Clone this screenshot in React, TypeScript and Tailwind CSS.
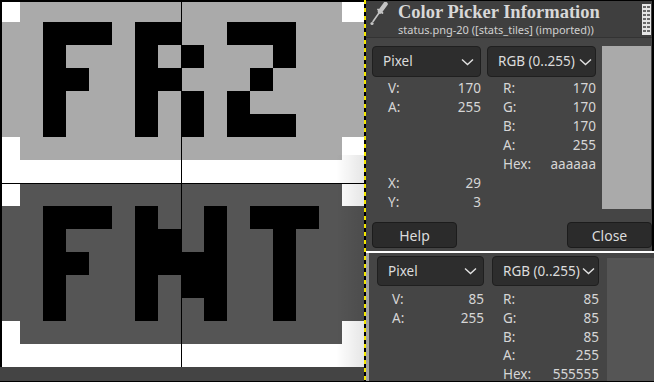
import React from "react";

// 16x16 cells: "." = tile gray, X = black, W = white
const frz = [
  "W..............W",
  "..XXX.XX..XXX...",
  "..X...X.X...X...",
  "..XX..XX...X....",
  "..X...X.X.X.....",
  "..X...X.X.XXX...",
  "W..............W",
  "WWWWWWWWWWWWWWWW",
];

const fnt = [
  "W..............W",
  "..XXX.X..X.XXX..",
  "..X...XX.X..X...",
  "..XX..XXXX..X...",
  "..X...X.XX..X...",
  "..X...X..X..X...",
  "W..............W",
  "WWWWWWWWWWWWWWWW",
];

const CELL = 23;

function PixelCanvas() {
  const rows = [
    ...frz.map((r) => ({ r, gray: "#aaaaaa" })),
    ...fnt.map((r) => ({ r, gray: "#555555" })),
  ];
  return (
    <svg width={364} height={381} className="block shrink-0" shapeRendering="crispEdges">
      <defs>
        <linearGradient id="shade" x1="0" x2="1" y1="0" y2="0">
          <stop offset="0" stopColor="#000" stopOpacity="0" />
          <stop offset="1" stopColor="#000" stopOpacity="0.1" />
        </linearGradient>
      </defs>
      <rect width={364} height={381} fill="#444444" />
      {rows.map(({ r, gray }, y) =>
        r.split("").map((ch, x) => (
          <rect
            key={`${x}-${y}`}
            x={-3 + x * CELL}
            y={-1 + y * CELL}
            width={CELL}
            height={CELL}
            fill={ch === "X" ? "#000000" : ch === "W" ? "#ffffff" : gray}
          />
        ))
      )}
      {/* drop shadow of the dialog */}
      <rect x={336} y={155} width={28} height={212} fill="url(#shade)" />
      {/* grid lines */}
      <rect x={181} y={0} width={1} height={367} fill="#000" />
      <rect x={0} y={183} width={364} height={1} fill="#000" />
      {/* frame */}
      <rect x={0} y={0} width={364} height={2} fill="#000" />
      <rect x={0} y={0} width={2} height={367} fill="#000" />
    </svg>
  );
}

function Chevron() {
  return (
    <svg width="13" height="8" viewBox="0 0 13 8" className="shrink-0">
      <path d="M1 1.5 L6.5 6.5 L12 1.5" fill="none" stroke="#e2e2e2" strokeWidth="1.4" />
    </svg>
  );
}

function Dropdown({ label, className }: { label: string; className: string }) {
  return (
    <div
      className={`flex items-center rounded-[4px] border border-[#1f1f1f] bg-[#2d2d2d] pl-[10px] text-[13.5px] text-[#dcdcdc] ${className}`}
    >
      <span className="flex-1 whitespace-nowrap">{label}</span>
      <Chevron />
    </div>
  );
}

function Row({
  label,
  value,
  pad,
  h,
}: {
  label?: string;
  value?: string;
  pad: string;
  h: string;
}) {
  return (
    <div className={`flex items-center justify-between ${pad} ${h} text-[13.5px] text-[#d6d6d6]`}>
      <span>{label}</span>
      <span>{value}</span>
    </div>
  );
}

function Eyedropper() {
  return (
    <svg width="20" height="25" viewBox="0 0 20 25" className="shrink-0">
      <path d="M16.5 2 L11 9.5" stroke="#c4c4c4" strokeWidth="4.5" strokeLinecap="round" />
      <path d="M9 7.5 L13.5 11" stroke="#c4c4c4" strokeWidth="1.8" strokeLinecap="round" />
      <path d="M11 9.5 L4 19.5" stroke="#c4c4c4" strokeWidth="1.6" strokeLinecap="round" />
      <circle cx="3" cy="21.5" r="1.6" fill="#c4c4c4" />
    </svg>
  );
}

function Grip() {
  return (
    <svg width="9" height="31" viewBox="0 0 9 31" className="absolute right-[1px] top-[3px]">
      <rect width="9" height="31" fill="#e6e6e6" />
      {[2, 6, 10, 14, 18, 22, 26].map((y) => (
        <g key={y} fill="#6a6a6a">
          <rect x="1" y={y} width="3" height="2" />
          <rect x="5" y={y} width="3" height="2" />
        </g>
      ))}
    </svg>
  );
}

export default function App() {
  return (
    <div className="flex h-[382px] w-[654px] overflow-hidden border-b border-black bg-black font-['Noto_Sans',sans-serif]">
      <PixelCanvas />
      <div className="h-full w-[2px] shrink-0 bg-[repeating-linear-gradient(to_bottom,#f2e600_0px,#f2e600_4px,#000_4px,#000_8px)]" />

      <div className="flex w-[288px] shrink-0 flex-col">
        {/* first picker dialog */}
        <div className="flex h-[251px] flex-col border-t border-r-2 border-black bg-[#454545]">
          <div className="relative flex h-[37px] items-start border-b border-[#333333] bg-[#3f3f3f]">
            <div className="ml-[3px] mt-[1px]">
              <Eyedropper />
            </div>
            <div className="ml-[9px] flex flex-col">
              <span className="font-['Liberation_Serif',serif] text-[18.5px] font-bold leading-[22px] text-[#d8d8d8]">
                Color Picker Information
              </span>
              <span className="text-[11px] leading-[14px] text-[#d0d0d0]">
                status.png-20 ([stats_tiles] (imported))
              </span>
            </div>
            <Grip />
          </div>

          <div className="flex flex-col pl-[6px] pt-[8px]">
            <div className="flex gap-[6px]">
              <div className="grid w-[224px] grid-cols-2 gap-x-[6px]">
                <Dropdown label="Pixel" className="h-[31px] pr-[6px]" />
                <Dropdown label="RGB (0..255)" className="h-[31px] pr-[3px]" />
                <div className="mt-[2px] flex flex-col">
                  <Row label="V:" value="170" pad="pl-[16px]" h="h-[19px]" />
                  <Row label="A:" value="255" pad="pl-[16px]" h="h-[19px]" />
                  <Row pad="pl-[16px]" h="h-[19px]" />
                  <Row pad="pl-[16px]" h="h-[19px]" />
                  <Row pad="pl-[16px]" h="h-[19px]" />
                  <Row label="X:" value="29" pad="pl-[16px]" h="h-[19px]" />
                  <Row label="Y:" value="3" pad="pl-[16px]" h="h-[19px]" />
                </div>
                <div className="mt-[2px] flex flex-col">
                  <Row label="R:" value="170" pad="pl-[16px]" h="h-[19px]" />
                  <Row label="G:" value="170" pad="pl-[16px]" h="h-[19px]" />
                  <Row label="B:" value="170" pad="pl-[16px]" h="h-[19px]" />
                  <Row label="A:" value="255" pad="pl-[16px]" h="h-[19px]" />
                  <Row label="Hex:" value="aaaaaa" pad="pl-[16px]" h="h-[19px]" />
                </div>
              </div>
              <div className="h-[163px] w-[49px] bg-[#aaaaaa]" />
            </div>

            <div className="mt-[10px] flex justify-between">
              <button className="h-[26px] w-[85px] rounded-[4px] border border-[#1c1c1c] bg-[#2b2b2b] text-[14px] text-[#dcdcdc]">
                Help
              </button>
              <button className="h-[26px] w-[85px] rounded-[4px] border border-[#1c1c1c] bg-[#2b2b2b] text-[14px] text-[#dcdcdc]">
                Close
              </button>
            </div>
          </div>
        </div>

        <div className="h-[2px] bg-white" />

        {/* second picker dialog */}
        <div className="flex h-[128px]">
          <div className="w-[3px] bg-[#a2a2a2]" />
          <div className="flex flex-1 bg-[#454545] pl-[8px] pt-[3px]">
            <div className="grid w-[222px] grid-cols-2 content-start gap-x-[8px]">
              <Dropdown label="Pixel" className="h-[30px] pr-[6px]" />
              <Dropdown label="RGB (0..255)" className="h-[30px] pr-[3px]" />
              <div className="mt-[4px] flex flex-col">
                <Row label="V:" value="85" pad="pl-[15px]" h="h-[18.7px]" />
                <Row label="A:" value="255" pad="pl-[15px]" h="h-[18.7px]" />
              </div>
              <div className="mt-[4px] flex flex-col">
                <Row label="R:" value="85" pad="pl-[11px]" h="h-[18.7px]" />
                <Row label="G:" value="85" pad="pl-[11px]" h="h-[18.7px]" />
                <Row label="B:" value="85" pad="pl-[11px]" h="h-[18.7px]" />
                <Row label="A:" value="255" pad="pl-[11px]" h="h-[18.7px]" />
                <Row label="Hex:" value="555555" pad="pl-[11px]" h="h-[18.7px]" />
              </div>
            </div>
            <div className="ml-[8px] mt-[2px] flex-1 bg-[#555555]" />
          </div>
        </div>
      </div>
    </div>
  );
}
